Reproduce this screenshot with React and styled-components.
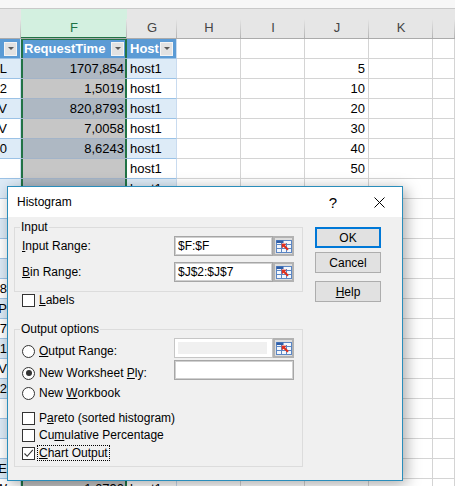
import styled, { createGlobalStyle, css } from "styled-components";

const GRID = "21px 106px 50px 64px 64px 64px 64px 1fr";
const GREEN = "#217346";

const GlobalStyle = createGlobalStyle`
  * { box-sizing: border-box; }
  body {
    margin: 0;
    background: #fff;
    overflow: hidden;
  }
`;

const rows = [
  { a: "L", f: "1707,854", g: "host1", j: "5" },
  { a: "2", f: "1,5019", g: "host1", j: "10" },
  { a: "V", f: "820,8793", g: "host1", j: "20" },
  { a: "V", f: "7,0058", g: "host1", j: "30" },
  { a: "0", f: "8,6243", g: "host1", j: "40" },
  { a: "", f: "", g: "host1", j: "50" },
  { a: "", f: "", g: "host1" },
  { a: "", f: "", g: "host1" },
  { a: "", f: "", g: "host1" },
  { a: "", f: "", g: "host1" },
  { a: "", f: "", g: "host1" },
  { a: "8", f: "", g: "host1" },
  { a: "P", f: "", g: "host1" },
  { a: "7", f: "", g: "host1" },
  { a: "1", f: "", g: "host1" },
  { a: "V", f: "", g: "host1" },
  { a: "2", f: "", g: "host1" },
  { a: "", f: "", g: "host1" },
  { a: "", f: "", g: "host1" },
  { a: "", f: "", g: "host1" },
  { a: "E", f: "", g: "host1" },
  { a: "W", f: "1,6790", g: "host1" },
];

const fills = {
  plain: "#ffffff",
  table: "#ffffff",
  band: "#ddebf7",
  head: "#5b9bd5",
};

const selectedFills = {
  table: "#c6c6c6",
  band: "#aeb8c3",
  head: "#5b9bd5",
};

const App = () => {
  return (
    <>
      <GlobalStyle />
      <Page>
        <TopStrip />
        <HeaderRow>
          <ColHead />
          <ColHead $active>F</ColHead>
          <ColHead>G</ColHead>
          <ColHead>H</ColHead>
          <ColHead>I</ColHead>
          <ColHead>J</ColHead>
          <ColHead>K</ColHead>
          <ColHead />
        </HeaderRow>

        <Row>
          <Cell $kind="head">
            <FilterButton />
          </Cell>
          <Cell $kind="head" $selected $top>
            RequestTime
            <FilterButton />
          </Cell>
          <Cell $kind="head">
            Host
            <FilterButton />
          </Cell>
          <Cell />
          <Cell />
          <Cell />
          <Cell />
          <Cell />
        </Row>

        {rows.map((row, i) => {
          const kind = i % 2 === 0 ? "band" : "table";
          return (
            <Row key={i}>
              <Cell $kind={kind} $align="right" $clip>
                {row.a}
              </Cell>
              <Cell $kind={kind} $align="right" $selected>
                {row.f}
              </Cell>
              <Cell $kind={kind}>{row.g}</Cell>
              <Cell />
              <Cell />
              <Cell $align="right">{row.j}</Cell>
              <Cell />
              <Cell />
            </Row>
          );
        })}

        <Dialog>
          <TitleBar>
            <Title>Histogram</Title>
            <TitleButton>?</TitleButton>
            <TitleButton>
              <svg width="11" height="11" viewBox="0 0 11 11">
                <path d="M0.5 0.5L10.5 10.5M10.5 0.5L0.5 10.5" stroke="#000" strokeWidth="1" />
              </svg>
            </TitleButton>
          </TitleBar>

          <Body>
            <Main>
              <Group $padBottom={9}>
                <Caption>Input</Caption>
                <FieldRow $gap={2}>
                  <Label>
                    <Key>I</Key>nput Range:
                  </Label>
                  <Field>
                    <TextBox>$F:$F</TextBox>
                    <RefButton>
                      <RefIcon />
                    </RefButton>
                  </Field>
                </FieldRow>
                <FieldRow $gap={6}>
                  <Label>
                    <Key>B</Key>in Range:
                  </Label>
                  <Field>
                    <TextBox>$J$2:$J$7</TextBox>
                    <RefButton>
                      <RefIcon />
                    </RefButton>
                  </Field>
                </FieldRow>
              </Group>

              <CheckRow $gap={1}>
                <CheckBox />
                <Label>
                  <Key>L</Key>abels
                </Label>
              </CheckRow>

              <Group $padBottom={5} $gap={22}>
                <Caption>Output options</Caption>
                <FieldRow $gap={2} $bottom>
                  <Option>
                    <Radio />
                    <Label>
                      <Key>O</Key>utput Range:
                    </Label>
                  </Option>
                  <Field>
                    <TextBox $disabled>
                      <DisabledFill />
                    </TextBox>
                    <RefButton>
                      <RefIcon />
                    </RefButton>
                  </Field>
                </FieldRow>
                <FieldRow $gap={2} $bottom>
                  <Option>
                    <Radio $on />
                    <Label>
                      New Worksheet <Key>P</Key>ly:
                    </Label>
                  </Option>
                  <Field>
                    <TextBox />
                  </Field>
                </FieldRow>
                <CheckRow $gap={6}>
                  <Radio />
                  <Label>
                    New <Key>W</Key>orkbook
                  </Label>
                </CheckRow>
                <CheckRow $gap={11}>
                  <CheckBox />
                  <Label>
                    P<Key>a</Key>reto (sorted histogram)
                  </Label>
                </CheckRow>
                <CheckRow $gap={3}>
                  <CheckBox />
                  <Label>
                    Cu<Key>m</Key>ulative Percentage
                  </Label>
                </CheckRow>
                <CheckRow $gap={3}>
                  <CheckBox $on>
                    <svg width="11" height="11" viewBox="0 0 11 11">
                      <path d="M1.5 5.5L4.2 8.3L9.8 1.8" stroke="#333" strokeWidth="1.1" fill="none" />
                    </svg>
                  </CheckBox>
                  <Label $focus>
                    <Key>C</Key>hart Output
                  </Label>
                </CheckRow>
              </Group>
            </Main>

            <Side>
              <Button $default>OK</Button>
              <Button $gap={4}>Cancel</Button>
              <Button $gap={8}>
                <Key>H</Key>elp
              </Button>
            </Side>
          </Body>
        </Dialog>
      </Page>
    </>
  );
};

const RefIcon = () => (
  <svg width="16" height="13" viewBox="0 0 16 13">
    <rect x="0.5" y="0.5" width="15" height="12" fill="#f3f7fc" stroke="#5b86c4" />
    <rect x="0.5" y="0.5" width="7" height="2.5" fill="#2f5ea8" />
    <path d="M0.5 4.5H15.5M0.5 8.5H15.5M5.5 3V12.5M10.5 3V12.5" stroke="#5b86c4" fill="none" />
    <path d="M5.5 3.5L10.5 3.8L9 5.2L12.8 9L11.3 10.5L7.5 6.7L6 8.2Z" fill="#e0301e" />
  </svg>
);

const Page = styled.div`
  position: relative;
  width: 455px;
  height: 486px;
  overflow: hidden;
  font-family: "Liberation Sans", Arial, sans-serif;
`;

const TopStrip = styled.div`
  height: 9px;
  background: #f7f7f7;
  border-bottom: 1px solid #c9c9c9;
`;

const HeaderRow = styled.div`
  display: grid;
  grid-template-columns: ${GRID};
  height: 30px;
  background: #e6e6e6;
  border-bottom: 1px solid #ababab;
`;

const ColHead = styled.div`
  position: relative;
  display: flex;
  justify-content: center;
  align-items: flex-end;
  padding-bottom: 3px;
  font-size: 13px;
  color: #444;
  background: ${(p) => (p.$active ? "#d3f0e0" : "transparent")};
  ${(p) => p.$active && css`
    color: ${GREEN};
    box-shadow: inset 0 -1px ${GREEN};
  `}

  &::after {
    content: "";
    position: absolute;
    right: 0;
    top: 10px;
    bottom: 0;
    width: 1px;
    background: linear-gradient(#e6e6e6, #b4b4b4);
  }
`;

const Row = styled.div`
  display: grid;
  grid-template-columns: ${GRID};
  height: 20px;
`;

const Cell = styled.div`
  display: flex;
  align-items: flex-end;
  justify-content: ${(p) => (p.$align === "right" ? "flex-end" : "flex-start")};
  overflow: hidden;
  white-space: nowrap;
  padding: 0 ${(p) => (p.$clip ? "13px" : "3px")} 1px 3px;
  font-size: 13px;
  line-height: 17px;
  color: #000;
  background: ${(p) => (p.$selected ? selectedFills[p.$kind] : fills[p.$kind || "plain"])};
  border-right: 1px solid ${(p) => (p.$kind ? "#c9dbef" : "#d4d4d4")};
  border-bottom: 1px solid ${(p) => (p.$kind ? "#9bc2e6" : "#d4d4d4")};

  ${(p) => p.$kind === "head" && css`
    color: #fff;
    font-weight: bold;
    align-items: center;
    padding-bottom: 0;
  `}

  ${(p) => p.$selected && css`
    border-right: none;
    border-bottom-color: #a3b4c8;
    padding-right: 3px;
    box-shadow: inset 2px 0 ${GREEN}, inset -2px 0 ${GREEN}
      ${p.$top ? `, inset 0 1px ${GREEN}` : ""};
  `}
`;

const FilterButton = styled.span`
  flex: none;
  width: 13px;
  height: 14px;
  margin-left: auto;
  background: #e2e2e2;
  border: 1px solid #f4f4f4;
  display: flex;
  align-items: center;
  justify-content: center;

  &::after {
    content: "";
    border-left: 3px solid transparent;
    border-right: 3px solid transparent;
    border-top: 3px solid #595959;
  }
`;

const Dialog = styled.div`
  position: absolute;
  left: 7px;
  top: 186px;
  width: 396px;
  height: 295px;
  display: flex;
  flex-direction: column;
  background: #f0f0f0;
  border: 1px solid #2a8dbb;
  box-shadow: 3px 3px 14px rgba(0, 0, 0, 0.35);
  font-size: 12px;
  color: #000;
`;

const TitleBar = styled.div`
  height: 30px;
  display: flex;
  align-items: center;
  padding-left: 9px;
  background: #fff;
`;

const Title = styled.span`
  flex: 1;
  font-size: 12px;
`;

const TitleButton = styled.span`
  width: 46px;
  height: 30px;
  display: flex;
  align-items: center;
  justify-content: center;
  font-size: 15px;
`;

const Body = styled.div`
  flex: 1;
  display: flex;
  gap: 12px;
  padding: 10px 0 0 6px;
`;

const Main = styled.div`
  width: 289px;
  display: flex;
  flex-direction: column;
`;

const Side = styled.div`
  width: 66px;
  display: flex;
  flex-direction: column;
`;

const Group = styled.div`
  display: flex;
  flex-direction: column;
  margin-top: ${(p) => p.$gap || 0}px;
  padding: 0 8px ${(p) => p.$padBottom}px 7px;
  border: 1px solid #dcdcdc;
`;

const Caption = styled.div`
  align-self: flex-start;
  margin: -8px 0 0 -2px;
  padding: 0 1px;
  line-height: 14px;
  background: #f0f0f0;
`;

const FieldRow = styled.div`
  display: flex;
  align-items: ${(p) => (p.$bottom ? "flex-end" : "center")};
  height: 20px;
  margin-top: ${(p) => p.$gap}px;
`;

const CheckRow = styled.div`
  display: flex;
  align-items: center;
  gap: 4px;
  min-height: 14px;
  margin-top: ${(p) => p.$gap}px;
  padding-left: ${(p) => (p.$gap === 1 ? 8 : 0)}px;
`;

const Option = styled.div`
  flex: 1;
  display: flex;
  align-items: center;
  gap: 4px;
`;

const Label = styled.span`
  flex: ${(p) => (p.$focus ? "none" : 1)};
  line-height: 14px;
  white-space: nowrap;
  ${(p) => p.$focus && css`
    margin-left: -2px;
    padding: 0 1px;
    border: 1px dotted #000;
  `}
`;

const Key = styled.span`
  text-decoration: underline;
`;

const Field = styled.div`
  display: flex;
  width: 120px;
  height: 20px;
`;

const TextBox = styled.div`
  flex: 1;
  display: flex;
  align-items: center;
  padding: 0 3px;
  background: #fff;
  border: 1px solid #a6a6a6;
  box-shadow: inset 0 0 0 1px #d0d0d0;

  ${(p) => p.$disabled && css`
    padding: 3px 5px 3px 3px;
    border-color: #c6c6c6;
    box-shadow: none;
  `}
`;

const DisabledFill = styled.span`
  flex: 1;
  align-self: stretch;
  background: #f0f0f0;
`;

const RefButton = styled.div`
  width: 21px;
  display: flex;
  align-items: center;
  justify-content: center;
  background: #dedede;
  border: 2px solid #b2b2b2;
`;

const CheckBox = styled.span`
  flex: none;
  width: 13px;
  height: 13px;
  display: flex;
  align-items: center;
  justify-content: center;
  background: #fff;
  border: 1px solid #333;
`;

const Radio = styled.span`
  flex: none;
  width: 13px;
  height: 13px;
  display: flex;
  align-items: center;
  justify-content: center;
  background: #fff;
  border: 1px solid #333;
  border-radius: 50%;

  ${(p) => p.$on && css`
    &::after {
      content: "";
      width: 6px;
      height: 6px;
      border-radius: 50%;
      background: #333;
    }
  `}
`;

const Button = styled.button`
  width: 66px;
  height: 21px;
  margin-top: ${(p) => p.$gap || 0}px;
  padding: 0;
  font-family: inherit;
  font-size: 12px;
  color: #000;
  background: #e1e1e1;
  border: 1px solid #adadad;

  ${(p) => p.$default && css`
    border: 2px solid #0078d7;
  `}
`;

export default App;
